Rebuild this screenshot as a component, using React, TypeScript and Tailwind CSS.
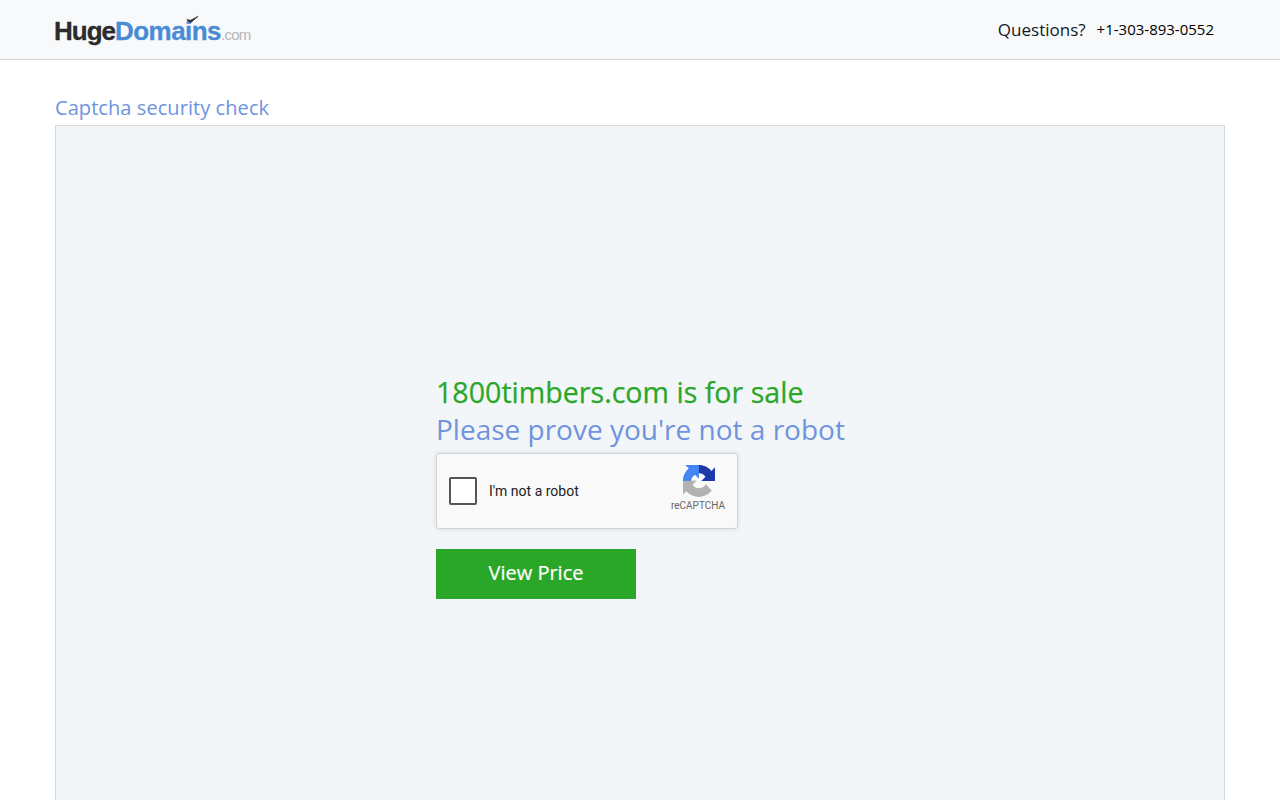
export default function App() {
  return (
    <div className="h-screen overflow-hidden bg-white font-['Open_Sans',sans-serif]">
      <header className="flex h-[60px] items-center justify-between border-b border-[#d5d6da] bg-[#f8f9fb] pl-[54px] pr-[66px]">
        <div className="relative flex items-baseline pt-[3px] font-['Liberation_Sans',sans-serif] font-bold [-webkit-text-stroke:0.3px]">
          <span className="text-[26px] leading-none tracking-[-1px] text-[#2b2b2b]">Huge</span>
          <span className="text-[26px] leading-none tracking-[-0.55px] text-[#4a8bd6]">Domains</span>
          <span className="text-[15px] leading-none font-normal tracking-[-0.7px] text-[#b5b7ba] [-webkit-text-stroke:0px]">.com</span>
          <svg className="absolute left-[132px] top-[0px]" width="13" height="10" viewBox="0 0 14 10">
            <path d="M1 4.5 L5 8 L13 1 L5 5.4 Z" fill="#2b2b2b" stroke="#2b2b2b" strokeWidth="0.8" strokeLinejoin="round" />
          </svg>
        </div>
        <div className="flex items-center gap-[11px] text-black">
          <span className="text-[17px] text-[#111827]">Questions?</span>
          <span className="text-[15px]">+1-303-893-0552</span>
        </div>
      </header>

      <main className="px-[55px] pt-[34px]">
        <h1 className="text-[20px] leading-[28px] font-normal tracking-[0.07px] text-[#6f93dd]">Captcha security check</h1>
        <section className="mt-[3px] h-[800px] border border-[#d5d8dc] bg-[#f3f6f9] pl-[380px] pt-[248px]">
          <h2 className="mb-[2px] text-[28.6px] leading-[35px] font-normal text-[#2aa728] [-webkit-text-stroke:0.25px]">1800timbers.com is for sale</h2>
          <p className="text-[28px] leading-[37px] text-[#6f93dd]">Please prove you're not a robot</p>

          <div className="mt-[5px] flex h-[76px] w-[302px] items-center justify-between rounded-[3px] border border-[#d3d3d3] bg-[#f9f9f9] pl-[12px] pr-[12px] shadow-[0_0_4px_1px_rgba(0,0,0,0.08)]">
            <div className="flex items-center gap-[12px]">
              <div className="h-[28px] w-[28px] rounded-[2px] border-2 border-[#555555] bg-white" />
              <span className="font-['Roboto',sans-serif] text-[14px] text-[#222222]">I'm not a robot</span>
            </div>
            <div className="flex flex-col items-center pb-[6px]">
              <svg className="ml-[2px]" width="32" height="32" viewBox="0 0 64 64">
                <path d="M64 31.955l-.033-1.37V4.687l-7.16 7.16C50.948 4.674 42.033.093 32.05.093c-10.4 0-19.622 4.96-25.458 12.64l11.736 11.86a15.55 15.55 0 0 1 4.754-5.334c2.05-1.6 4.952-2.906 8.968-2.906.485 0 .86.057 1.135.163 4.976.393 9.288 3.14 11.828 7.124l-8.307 8.307 32.294.008" fill="#1c3aa9" />
                <path d="M31.862 0l-1.37.033H4.594l7.16 7.16C4.58 13.052 0 21.967 0 31.95c0 10.4 4.96 19.622 12.64 25.458L24.5 45.672a15.55 15.55 0 0 1-5.334-4.754c-1.6-2.05-2.906-4.952-2.906-8.968 0-.485.057-.86.163-1.135.393-4.976 3.14-9.288 7.124-11.828l8.307 8.307L31.862 0" fill="#4285f4" />
                <path d="M0 31.95l.033 1.37v25.898l7.16-7.16c5.86 7.173 14.775 11.754 24.76 11.754 10.4 0 19.622-4.96 25.458-12.64L45.675 38.31a15.55 15.55 0 0 1-4.754 5.334c-2.05 1.6-4.952 2.906-8.968 2.906-.485 0-.86-.057-1.135-.163-4.976-.393-9.288-3.14-11.828-7.124l8.307-8.307L0 31.95" fill="#b2b2b2" />
              </svg>
              <span className="mt-[3px] font-['Roboto',sans-serif] text-[10px] leading-[12px] text-[#666666]">reCAPTCHA</span>
            </div>
          </div>

          <button className="mt-[20px] block h-[50px] w-[200px] bg-[#2aa728] pb-[2px] text-[20px] font-normal text-white [-webkit-text-stroke:0.2px]">View Price</button>
        </section>
      </main>
    </div>
  );
}
